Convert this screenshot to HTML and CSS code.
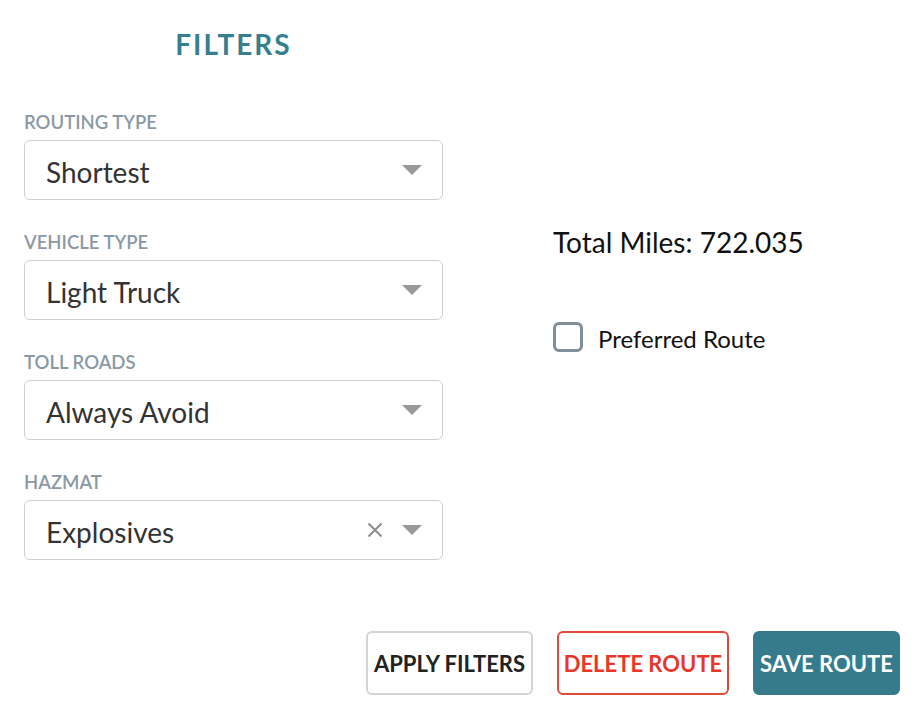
FILE: index.html
```html
<!DOCTYPE html>
<html lang="en">
<head>
<meta charset="utf-8">
<title>Filters</title>
<link rel="stylesheet" href="styles.css">
</head>
<body>
<div class="page">
  <div class="main">
    <section class="filters">
      <h2 class="title">FILTERS</h2>
      <div class="field">
        <label class="label">ROUTING TYPE</label>
        <div class="select">
          <span class="value">Shortest</span>
          <span class="controls"><span class="caret"></span></span>
        </div>
      </div>
      <div class="field">
        <label class="label">VEHICLE TYPE</label>
        <div class="select">
          <span class="value">Light Truck</span>
          <span class="controls"><span class="caret"></span></span>
        </div>
      </div>
      <div class="field">
        <label class="label">TOLL ROADS</label>
        <div class="select">
          <span class="value">Always Avoid</span>
          <span class="controls"><span class="caret"></span></span>
        </div>
      </div>
      <div class="field">
        <label class="label">HAZMAT</label>
        <div class="select">
          <span class="value">Explosives</span>
          <span class="controls">
            <svg class="clear" width="16" height="16" viewBox="0 0 16 16"><path d="M1.5 1.5 L14.5 14.5 M14.5 1.5 L1.5 14.5" stroke="#8c8c8c" stroke-width="2" fill="none"/></svg>
            <span class="caret"></span>
          </span>
        </div>
      </div>
    </section>
    <section class="summary">
      <div class="miles">Total Miles: 722.035</div>
      <label class="check">
        <span class="box"></span>
        <span class="check-text">Preferred Route</span>
      </label>
    </section>
  </div>
  <div class="actions">
    <button class="btn btn-apply">APPLY FILTERS</button>
    <button class="btn btn-delete">DELETE ROUTE</button>
    <button class="btn btn-save">SAVE ROUTE</button>
  </div>
</div>
</body>
</html>
```
FILE: styles.css
```css
* { box-sizing: border-box; }
html, body { margin: 0; background: #fff; }
body {
  font-family: Lato, "Noto Sans", "Liberation Sans", sans-serif;
  color: #222;
}
.page {
  width: 918px;
  padding: 0 18px 0 24px;
}
.main {
  display: grid;
  grid-template-columns: 419px 1fr;
  column-gap: 110px;
  align-items: start;
}
.filters {
  display: flex;
  flex-direction: column;
}
.title {
  margin: 0;
  padding-top: 27px;
  text-align: center;
  font-size: 28px;
  line-height: 34px;
  font-weight: 700;
  letter-spacing: 2px;
  color: #357f8e;
}
.field {
  display: flex;
  flex-direction: column;
}
.filters .field:first-of-type { margin-top: 50px; }
.field + .field { margin-top: 31px; }
.label {
  font-size: 18.5px;
  line-height: 22px;
  font-weight: 600;
  color: #8a99a4;
  margin-bottom: 7px;
}
.select {
  height: 60px;
  border: 1.5px solid #cfcfcf;
  border-radius: 6px;
  display: flex;
  align-items: center;
  padding: 0 20px 0 21px;
}
.value {
  flex: 1;
  font-size: 28px;
  padding-top: 4px;
  color: #333;
}
.controls {
  display: flex;
  align-items: center;
  gap: 19px;
}
.caret {
  width: 0;
  height: 0;
  border-left: 10px solid transparent;
  border-right: 10px solid transparent;
  border-top: 10px solid #999;
}
.clear { display: block; }
.summary {
  padding-top: 226px;
  display: flex;
  flex-direction: column;
}
.miles {
  font-size: 28px;
  line-height: 32px;
  color: #111;
}
.check {
  margin-top: 64px;
  display: flex;
  align-items: flex-start;
  gap: 15px;
}
.box {
  width: 30px;
  height: 30px;
  border: 3px solid #7f8e98;
  border-radius: 6px;
}
.check-text {
  font-size: 24px;
  line-height: 30px;
  padding-top: 2px;
  color: #111;
}
.actions {
  display: flex;
  justify-content: flex-end;
  gap: 24px;
  margin-top: 71px;
}
.btn {
  height: 64px;
  padding: 0;
  white-space: nowrap;
  border-radius: 6px;
  font-family: Lato, "Noto Sans", "Liberation Sans", sans-serif;
  font-size: 22px;
  font-weight: 700;
  background: #fff;
}
.btn-apply {
  width: 167px;
  border: 2px solid #d4d4d4;
  color: #222;
}
.btn-delete {
  width: 172px;
  border: 2px solid #e04a3a;
  color: #e8372a;
}
.btn-save {
  width: 147px;
  border: 2px solid #357b8c;
  background: #357b8c;
  color: #fff;
}
```
